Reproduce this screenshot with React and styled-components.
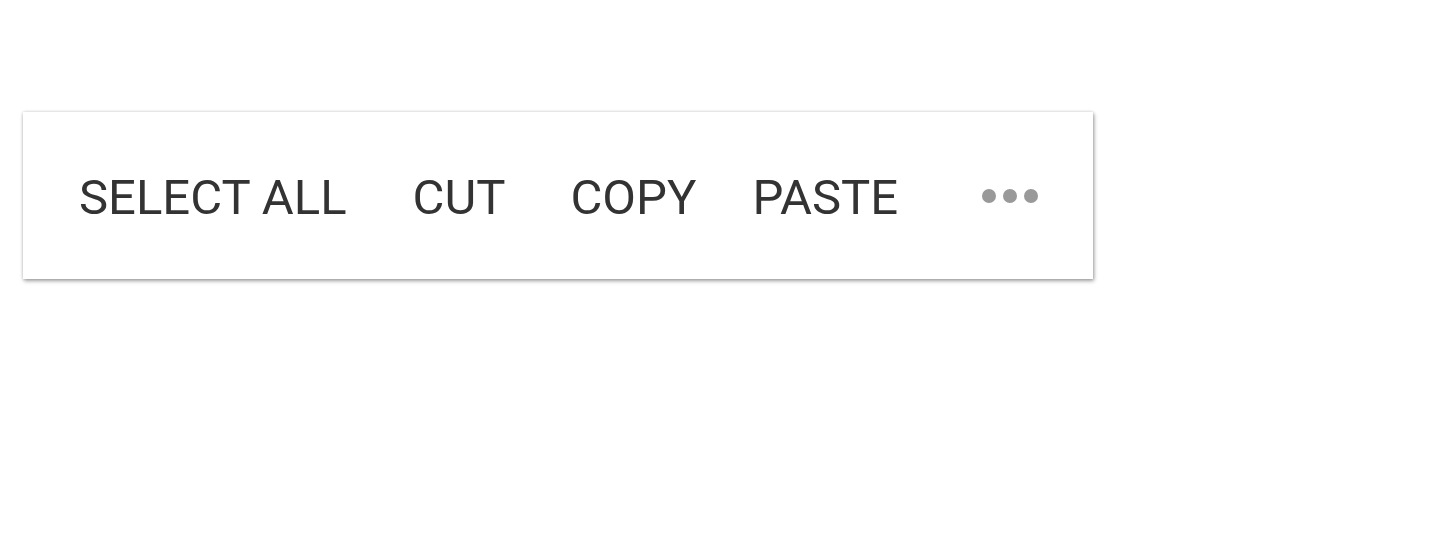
import * as React from 'react'
import styled, { createGlobalStyle } from 'styled-components'

const Global = createGlobalStyle`
  body {
    margin: 0;
    background: #ffffff;
    font-family: Roboto, "Liberation Sans", sans-serif;
  }
`

const Page = styled.div`
  min-height: 100vh;
  box-sizing: border-box;
  padding: 112px 0 0 23px;
`

const Toolbar = styled.div`
  display: flex;
  align-items: center;
  width: 1070px;
  height: 167px;
  box-sizing: border-box;
  padding: 0 55px 0 56px;
  background: #ffffff;
  box-shadow: 1px 2px 4px rgba(0, 0, 0, 0.36), 0 0 3px rgba(0, 0, 0, 0.16);
`

const Action = styled.button`
  border: 0;
  background: none;
  margin: 0 ${p => p.$space}px 0 0;
  padding: 4px 0 0;
  font-family: Roboto, "Liberation Sans", sans-serif;
  font-size: 49px;
  line-height: 1;
  color: #333333;
  text-transform: uppercase;
  cursor: pointer;
`

const More = styled.button`
  display: flex;
  gap: 7px;
  border: 0;
  background: none;
  margin-left: auto;
  padding: 0;
  cursor: pointer;
`

const Dot = styled.span`
  width: 14px;
  height: 14px;
  border-radius: 50%;
  background: #999999;
`

const actions = [
  { label: 'Select all', space: 66 },
  { label: 'Cut', space: 65 },
  { label: 'Copy', space: 56 },
  { label: 'Paste', space: 0 },
]

export default function App() {
  return (
    <Page>
      <Global />
      <Toolbar>
        {actions.map(a => (
          <Action key={a.label} $space={a.space}>{a.label}</Action>
        ))}
        <More aria-label="More">
          <Dot />
          <Dot />
          <Dot />
        </More>
      </Toolbar>
    </Page>
  )
}
